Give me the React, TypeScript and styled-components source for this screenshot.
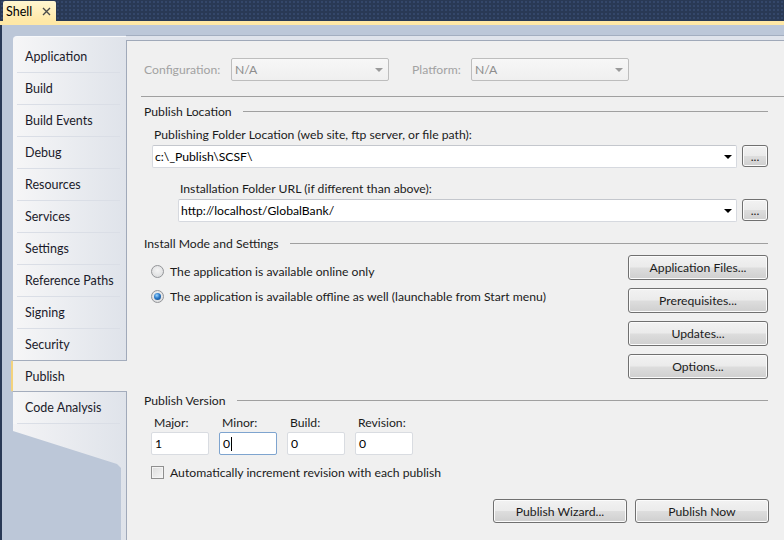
import styled, { createGlobalStyle } from 'styled-components';

const GlobalStyle = createGlobalStyle`
    html, body {
        margin: 0;
        padding: 0;
    }

    body {
        width: 784px;
        height: 540px;
        overflow: hidden;
        background: #293955;
        font-family: Lato, 'Liberation Sans', sans-serif;
        font-size: 12.2px;
        color: #1b1b1b;
    }
`;

const Window = styled.div`
    display: flex;
    flex-direction: column;
    height: 540px;
`;

const TopBar = styled.div`
    display: flex;
    align-items: flex-end;
    height: 21px;
    padding-left: 3px;
    background-color: #293955;
    background-image: radial-gradient(circle, #34476a 0.8px, transparent 1px);
    background-size: 4px 4px;
`;

const DocTab = styled.div`
    display: flex;
    align-items: center;
    gap: 10px;
    height: 20px;
    padding: 0 5px 0 3px;
    border-radius: 2px 2px 0 0;
    background: linear-gradient(#fff6d2, #ffe8a6);
    color: #000;
    font-size: 12.5px;
`;

const AccentLine = styled.div`
    height: 4px;
    background: #ffe8a6;
`;

const Frame = styled.div`
    flex: 1;
    display: flex;
    margin-left: 2px;
    padding: 10px 0 0 11px;
    background: #bcc7d8;
    min-height: 0;
`;

const Sidebar = styled.div`
    display: flex;
    flex-direction: column;
    width: 113px;
    margin-top: 1px;
    position: relative;
    z-index: 1;
`;

const TabList = styled.div`
    display: flex;
    flex-direction: column;
    padding-top: 4px;
    border-radius: 4px 0 0 0;
    border-top: 1px solid #f8f9fb;
    background: linear-gradient(to right, #f6f6f7, #dfe3ea);
`;

const SideTab = styled.div<{ $active?: boolean }>`
    display: flex;
    align-items: center;
    box-sizing: border-box;
    height: ${p => (p.$active ? '32px' : '31px')};
    padding-left: 12px;
    white-space: nowrap;
    color: #1b1b2b;
    font-size: 12.5px;

    ${p =>
        p.$active &&
        `
        margin: 0 -1px 0 -2px;
        background: #f0f0f0;
        border-top: 1px solid #a4adbd;
        border-bottom: 1px solid #a4adbd;
        border-left: 2px solid #f3d37e;
        border-radius: 2px 0 0 2px;
    `}
`;

const TabDivider = styled.div`
    height: 1px;
    margin: 0 6px 0 4px;
    background: #dadee6;
`;

const SidebarTail = styled.div`
    flex: 1;
    background: linear-gradient(to right, #f3f3f5, #dfe3ea);
    clip-path: polygon(
        0 0,
        100% 0,
        100% 100%,
        108px 100%,
        108px 44px,
        104px 40px,
        0 7px
    );
`;

const ContentWrap = styled.div`
    flex: 1;
    display: flex;
    flex-direction: column;
    border-top: 1px solid #a3aec0;
    padding-top: 4px;
    background: #dfe3eb;
`;

const ContentPanel = styled.div`
    flex: 1;
    display: flex;
    flex-direction: column;
    padding: 17px 16px 0 17px;
    border-top: 1px solid #a0a9b9;
    border-left: 1px solid #a0a9b9;
    background: #f0f0f0;
`;

const ConfigRow = styled.div`
    display: flex;
    align-items: center;
    height: 23px;
`;

const DimLabel = styled.span<{ $width: number; $gap?: number }>`
    width: ${p => p.$width}px;
    margin-left: ${p => p.$gap ?? 0}px;
    color: #a2a2a2;
`;

const DisabledSelect = styled.div`
    display: flex;
    align-items: center;
    justify-content: space-between;
    box-sizing: border-box;
    width: 158px;
    height: 23px;
    padding: 0 5px 0 3px;
    border: 1px solid #bdbdbd;
    border-radius: 2px;
    background: linear-gradient(#f7f7f7, #efefef);
    color: #8d8d8d;
`;

const Arrow = styled.span<{ $color: string }>`
    width: 0;
    height: 0;
    border-left: 4px solid transparent;
    border-right: 4px solid transparent;
    border-top: 4px solid ${p => p.$color};
`;

const Rule = styled.div`
    height: 1px;
    margin: 15px -16px 0 -3px;
    background: #a0a0a0;
`;

const SectionHeader = styled.div<{ $top: number }>`
    display: flex;
    align-items: center;
    gap: 11px;
    height: 14px;
    margin-top: ${p => p.$top}px;

    &::after {
        content: '';
        flex: 1;
        height: 1px;
        background: #a0a0a0;
    }
`;

const FieldLabel = styled.div<{ $indent: number; $top: number }>`
    height: 14px;
    line-height: 14px;
    margin: ${p => p.$top}px 0 0 ${p => p.$indent}px;
`;

const ComboRow = styled.div<{ $indent: number }>`
    display: flex;
    align-items: flex-start;
    gap: 5px;
    margin: 3px 0 0 ${p => p.$indent}px;
`;

const Combo = styled.div`
    flex: 1;
    display: flex;
    align-items: center;
    justify-content: space-between;
    box-sizing: border-box;
    height: 23px;
    padding: 0 4px 0 2px;
    border: 1px solid #d6d9df;
    border-top-color: #c4c7cd;
    border-radius: 2px;
    background: #fff;
    color: #000;
`;

const WinButton = styled.button<{ $width: number; $height?: number }>`
    box-sizing: border-box;
    width: ${p => p.$width}px;
    height: ${p => p.$height ?? 25}px;
    padding: 0;
    border: 1px solid #707070;
    border-radius: 3px;
    background: linear-gradient(#f2f2f2 0%, #ebebeb 48%, #dddddd 52%, #cfcfcf 100%);
    box-shadow: inset 0 0 0 1px #fbfbfb;
    font-family: inherit;
    font-size: 12.2px;
    color: #1b1b1b;
`;

const InstallArea = styled.div`
    display: flex;
    justify-content: space-between;
    margin-top: 5px;
`;

const RadioList = styled.div`
    display: flex;
    flex-direction: column;
    gap: 7px;
    padding: 7px 0 0 7px;
`;

const RadioRow = styled.label`
    display: flex;
    align-items: center;
    gap: 6px;
    height: 18px;
`;

const RadioDot = styled.span<{ $checked?: boolean }>`
    display: flex;
    align-items: center;
    justify-content: center;
    box-sizing: border-box;
    width: 13px;
    height: 13px;
    border: 1px solid #939598;
    border-radius: 50%;
    background: radial-gradient(circle at 50% 40%, #f4f4f4, #d7d8da);

    &::after {
        content: '';
        display: ${p => (p.$checked ? 'block' : 'none')};
        width: 7px;
        height: 7px;
        border-radius: 50%;
        background: radial-gradient(circle at 40% 35%, #9cd6ff 0%, #2a79c8 45%, #123f75 100%);
    }
`;

const ButtonColumn = styled.div`
    display: flex;
    flex-direction: column;
    gap: 8px;
`;

const VersionRow = styled.div`
    display: flex;
    gap: 10px;
    margin: 9px 0 0 7px;
`;

const VersionField = styled.div`
    display: flex;
    flex-direction: column;
    gap: 2px;
`;

const VersionLabel = styled.span`
    height: 14px;
    line-height: 14px;
    padding-left: 3px;
`;

const TextBox = styled.div<{ $focused?: boolean }>`
    display: flex;
    align-items: center;
    box-sizing: border-box;
    width: 58px;
    height: 23px;
    padding-left: 3px;
    border: 1px solid ${p => (p.$focused ? '#7ea4cf' : '#d9dce1')};
    border-radius: 2px;
    background: #fff;
    color: #000;
`;

const Caret = styled.span`
    width: 1px;
    height: 14px;
    margin-left: 1px;
    background: #000;
`;

const CheckRow = styled.label`
    display: flex;
    align-items: center;
    gap: 6px;
    margin: 11px 0 0 7px;
    height: 13px;
`;

const CheckBox = styled.span`
    box-sizing: border-box;
    width: 13px;
    height: 13px;
    border: 1px solid #8f8f8f;
    background: linear-gradient(135deg, #dcdcdc, #f6f6f6);
    box-shadow: inset 0 0 0 1px #f4f4f4;
`;

const FooterButtons = styled.div`
    display: flex;
    justify-content: flex-end;
    gap: 8px;
    margin: 20px -1px 0 0;
`;

const CloseIcon = () => (
    <svg width="9" height="9" viewBox="0 0 9 9">
        <path d="M1 1 L8 8 M8 1 L1 8" stroke="#4b4b4b" strokeWidth="1.4" />
    </svg>
);

const pages = [
    'Application',
    'Build',
    'Build Events',
    'Debug',
    'Resources',
    'Services',
    'Settings',
    'Reference Paths',
    'Signing',
    'Security',
    'Publish',
    'Code Analysis',
];

const activePage = 'Publish';

const version = [
    { label: 'Major:', value: '1' },
    { label: 'Minor:', value: '0', focused: true },
    { label: 'Build:', value: '0' },
    { label: 'Revision:', value: '0' },
];

export default function App() {
    const activeIndex = pages.indexOf(activePage);

    return (
        <Window>
            <GlobalStyle />
            <TopBar>
                <DocTab>
                    Shell
                    <CloseIcon />
                </DocTab>
            </TopBar>
            <AccentLine />
            <Frame>
                <Sidebar>
                    <TabList>
                        {pages.map((page, i) => {
                            const divider =
                                i !== activeIndex && i + 1 !== activeIndex;
                            return (
                                <div key={page}>
                                    <SideTab $active={i === activeIndex}>
                                        {page}
                                    </SideTab>
                                    {divider && <TabDivider />}
                                </div>
                            );
                        })}
                    </TabList>
                    <SidebarTail />
                </Sidebar>
                <ContentWrap>
                    <ContentPanel>
                        <ConfigRow>
                            <DimLabel $width={87}>Configuration:</DimLabel>
                            <DisabledSelect>
                                N/A
                                <Arrow $color="#9a9a9a" />
                            </DisabledSelect>
                            <DimLabel $width={59} $gap={23}>
                                Platform:
                            </DimLabel>
                            <DisabledSelect>
                                N/A
                                <Arrow $color="#9a9a9a" />
                            </DisabledSelect>
                        </ConfigRow>
                        <Rule />

                        <SectionHeader $top={7}>Publish Location</SectionHeader>
                        <FieldLabel $indent={10} $top={10}>
                            Publishing Folder Location (web site, ftp server, or file path):
                        </FieldLabel>
                        <ComboRow $indent={8}>
                            <Combo>
                                c:\_Publish\SCSF\
                                <Arrow $color="#000" />
                            </Combo>
                            <WinButton $width={26} $height={22}>
                                ...
                            </WinButton>
                        </ComboRow>
                        <FieldLabel $indent={36} $top={14}>
                            Installation Folder URL (if different than above):
                        </FieldLabel>
                        <ComboRow $indent={34}>
                            <Combo>
                                http://localhost/GlobalBank/
                                <Arrow $color="#000" />
                            </Combo>
                            <WinButton $width={26} $height={22}>
                                ...
                            </WinButton>
                        </ComboRow>

                        <SectionHeader $top={14}>Install Mode and Settings</SectionHeader>
                        <InstallArea>
                            <RadioList>
                                <RadioRow>
                                    <RadioDot />
                                    The application is available online only
                                </RadioRow>
                                <RadioRow>
                                    <RadioDot $checked />
                                    The application is available offline as well (launchable from Start menu)
                                </RadioRow>
                            </RadioList>
                            <ButtonColumn>
                                <WinButton $width={140}>Application Files...</WinButton>
                                <WinButton $width={140}>Prerequisites...</WinButton>
                                <WinButton $width={140}>Updates...</WinButton>
                                <WinButton $width={140}>Options...</WinButton>
                            </ButtonColumn>
                        </InstallArea>

                        <SectionHeader $top={14}>Publish Version</SectionHeader>
                        <VersionRow>
                            {version.map(v => (
                                <VersionField key={v.label}>
                                    <VersionLabel>{v.label}</VersionLabel>
                                    <TextBox $focused={v.focused}>
                                        {v.value}
                                        {v.focused && <Caret />}
                                    </TextBox>
                                </VersionField>
                            ))}
                        </VersionRow>
                        <CheckRow>
                            <CheckBox />
                            Automatically increment revision with each publish
                        </CheckRow>
                        <FooterButtons>
                            <WinButton $width={134} $height={24}>
                                Publish Wizard...
                            </WinButton>
                            <WinButton $width={134} $height={24}>
                                Publish Now
                            </WinButton>
                        </FooterButtons>
                    </ContentPanel>
                </ContentWrap>
            </Frame>
        </Window>
    );
}
